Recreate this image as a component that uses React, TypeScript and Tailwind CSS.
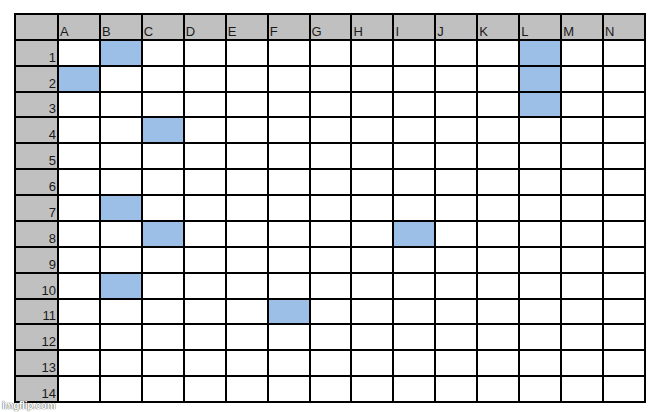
import { Fragment, memo } from "react";

const cols = ["A", "B", "C", "D", "E", "F", "G", "H", "I", "J", "K", "L", "M", "N"];
const rows = Array.from({ length: 14 }, (_, i) => i + 1);

// cells marked blue, as "B1" etc.
const filled = new Set(["B1", "A2", "L1", "L2", "L3", "C4", "B7", "C8", "I8", "B10", "F11"]);

function App() {
  return (
    <div className="relative w-[658px] h-[412px] bg-white font-['Liberation_Sans',Arial,sans-serif] text-[13px] text-[#1a1a1a] overflow-hidden">
      <div className="pt-[13px] pl-[14px]">
        <div className="grid w-[632px] h-[390px] bg-black p-[2px] gap-[2px] grid-cols-[41px_repeat(14,1fr)] grid-rows-[repeat(15,1fr)]">
          <div className="bg-[#c0c0c0]" />
          {cols.map((c) => (
            <div key={c} className="bg-[#c0c0c0] flex items-end pl-[1px] leading-none pb-[1px]">
              {c}
            </div>
          ))}
          {rows.map((r) => (
            <Fragment key={r}>
              <div className="bg-[#c0c0c0] flex items-end justify-end pr-[1px] leading-none pb-[1px]">
                {r}
              </div>
              {cols.map((c) => (
                <div key={c + r} className={filled.has(c + r) ? "bg-[#9bbfe6]" : "bg-white"} />
              ))}
            </Fragment>
          ))}
        </div>
      </div>
      <div className="absolute left-[2px] top-[401px] text-[10px] font-bold leading-none text-white tracking-tight [text-shadow:0_0_1px_#555,0_0_1px_#555]">
        imgflip.com
      </div>
    </div>
  );
}

export default memo(App);
